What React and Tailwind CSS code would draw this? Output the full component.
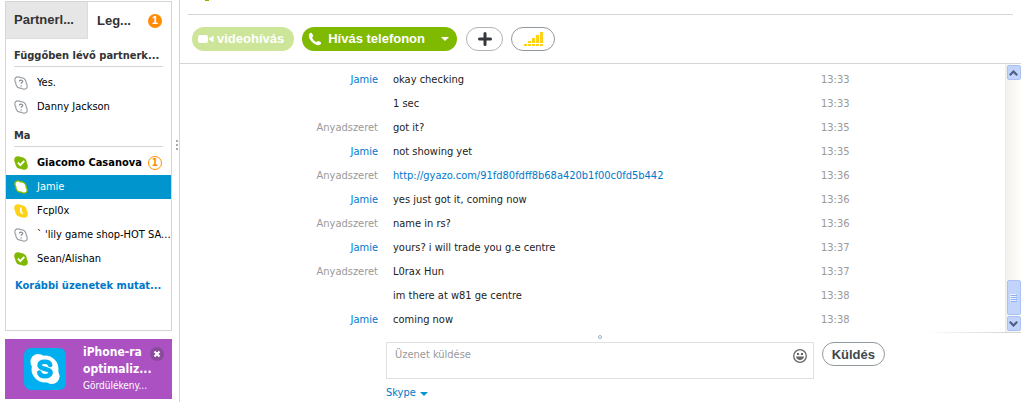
import { useState } from 'react';

const pending = [
  { name: 'Yes.', status: 'unknown' },
  { name: 'Danny Jackson', status: 'unknown' },
];

const today = [
  { name: 'Giacomo Casanova', status: 'online', unread: 1 },
  { name: 'Jamie', status: 'active' },
  { name: 'Fcpl0x', status: 'away' },
  { name: "` 'lily game shop-HOT SA...", status: 'unknown' },
  { name: 'Sean/Alishan', status: 'online' },
];

const messages = [
  { from: 'Jamie', text: 'okay checking', time: '13:33' },
  { from: '', text: '1 sec', time: '13:33' },
  { from: 'Anyadszeret', text: 'got it?', time: '13:35' },
  { from: 'Jamie', text: 'not showing yet', time: '13:35' },
  { from: 'Anyadszeret', text: 'http://gyazo.com/91fd80fdff8b68a420b1f00c0fd5b442', time: '13:36', link: true },
  { from: 'Jamie', text: 'yes just got it, coming now', time: '13:36' },
  { from: 'Anyadszeret', text: 'name in rs?', time: '13:36' },
  { from: 'Jamie', text: 'yours? i will trade you g.e centre', time: '13:37' },
  { from: 'Anyadszeret', text: 'L0rax Hun', time: '13:37' },
  { from: '', text: 'im there at w81 ge centre', time: '13:38' },
  { from: 'Jamie', text: 'coming now', time: '13:38' },
];

// Round body with a lobe at the top left and one at the bottom right
const Blob = ({ fill, inset = 0 }) => (
  <g fill={fill}>
    <circle cx="7" cy="7" r={5.9 - inset} />
    <circle cx="4" cy="4" r={3.8 - inset} />
    <circle cx="10" cy="10" r={3.8 - inset} />
  </g>
);

const StatusIcon = ({ status }) => (
  <svg viewBox="0 0 14 14" className="w-[14px] h-[14px] shrink-0" aria-hidden="true">
    {status === 'unknown' && (
      <>
        <Blob fill="#9aa2a8" />
        <Blob fill="#fff" inset={1.2} />
        <path d="M5.300 5.500c.1-1.800 3.400-1.800 3.400-.1 0 1.200-1.600 1.200-1.600 2.400M7.100 9.200v1.200" fill="none" stroke="#858d93" strokeWidth="1.200" />
      </>
    )}
    {status === 'online' && (
      <>
        <Blob fill="#7fba00" />
        <path d="M4 6.700l2.300 2.400 4-4.200" fill="none" stroke="#fff" strokeWidth="1.900" />
      </>
    )}
    {status === 'active' && (
      <>
        <Blob fill="#7fba00" />
        <Blob fill="#fff" inset={1.3} />
      </>
    )}
    {status === 'away' && (
      <>
        <Blob fill="#ffd117" />
        <path d="M6.800 3.500v4l1.800 2.400" fill="none" stroke="#fff" strokeWidth="1.700" />
      </>
    )}
  </svg>
);

const Contact = ({ contact, selected, onSelect }) => (
  <li>
    <button
      onClick={() => onSelect(contact.name)}
      className={`flex items-center w-full h-6 pl-2 text-left whitespace-nowrap ${
        selected ? 'bg-[#0095cc] text-white' : 'text-black'
      } ${contact.unread ? 'font-bold' : ''}`}
    >
      <StatusIcon status={contact.status} />
      <span className="ml-[9px] pt-px flex-1">{contact.name}</span>
      {contact.unread && (
        <span className="flex items-center justify-center w-[14px] h-[14px] mr-[9px] rounded-full border border-[#ff8c00] text-[#ff8c00] text-[10px] leading-none">
          {contact.unread}
        </span>
      )}
    </button>
  </li>
);

const GroupTitle = ({ children }) => (
  <h2 className="mx-2 h-6 leading-[26px] border-b border-[#d5d5d5] font-bold text-[#333] whitespace-nowrap">{children}</h2>
);

const Sidebar = () => {
  const [selected, setSelected] = useState('Jamie');

  return (
    <aside className="flex flex-col w-[172px] shrink-0 pl-[5px] pt-px pb-[3px]">
      <div className="flex-1 border border-[#d5d5d5]">
        <div className="flex h-[37px] font-['Liberation_Sans',Arial,sans-serif] text-[13px] font-bold text-[#333]">
          <button className="w-[82px] pl-2 text-left bg-[#e6e6e6] border-r border-b border-[#dcdcdc]">Partnerl...</button>
          <button className="flex flex-1 items-center justify-between px-[9px]">
            Leg...
            <span className="flex items-center justify-center w-[14px] h-[14px] rounded-full bg-[#ff8c00] text-white text-[11px] leading-none">1</span>
          </button>
        </div>

        <div className="pt-1">
          <GroupTitle>Függőben lévő partnerk...</GroupTitle>
          <ul className="pt-1">
            {pending.map((c) => (
              <Contact key={c.name} contact={c} selected={selected === c.name} onSelect={setSelected} />
            ))}
          </ul>
        </div>
        <div className="pt-1">
          <GroupTitle>Ma</GroupTitle>
          <ul className="pt-1">
            {today.map((c) => (
              <Contact key={c.name} contact={c} selected={selected === c.name} onSelect={setSelected} />
            ))}
          </ul>
        </div>
        <a href="#history" className="block ml-[9px] mt-[2px] leading-[26px] font-bold text-[#0078ca] whitespace-nowrap">
          Korábbi üzenetek mutat...
        </a>
      </div>

      {/* Promo */}
      <div className="flex mt-2 h-[60px] bg-[#ab51c2] text-white">
        <svg viewBox="0 0 42 42" className="w-[42px] h-[42px] ml-[19px] mt-[9px] shrink-0" aria-hidden="true">
          <rect width="42" height="42" rx="7" fill="#00aff0" />
          <circle cx="21" cy="21" r="13.500" fill="#fff" />
          <circle cx="14.200" cy="13.800" r="7.800" fill="#fff" />
          <circle cx="27.800" cy="28.200" r="7.800" fill="#fff" />
          <path
            d="M26.200 17c-.6-2.400-2.600-3.300-5.200-3.300-3.200 0-5.400 1.300-5.400 3.600 0 5 11 2.400 11 7.200 0 2.400-2.400 3.700-5.600 3.700-3.200 0-5.200-1.200-5.700-3.700"
            fill="none"
            stroke="#00aff0"
            strokeWidth="4.600"
            strokeLinecap="round"
          />
        </svg>
        <div className="flex-1 ml-[17px] pt-[5px] whitespace-nowrap">
          <div className="flex justify-between pr-2">
            <p className="text-[12px] leading-[17px] font-bold">iPhone-ra<br />optimaliz...</p>
            <button aria-label="Bezárás" className="-ml-3 mt-[3px] w-[14px] h-[14px] rounded-full bg-[#8a4a9c]">
              <svg viewBox="0 0 14 14" className="w-[14px] h-[14px]">
                <path d="M4.500 4.500l5 5M9.500 4.500l-5 5" stroke="#fff" strokeWidth="2" />
              </svg>
            </button>
          </div>
          <p className="text-[10px] leading-[15px]">Gördülékeny...</p>
        </div>
      </div>
    </aside>
  );
};

const Toolbar = () => (
  <header className="border-b border-[#d5d5d5]">
    {/* Bottom edge of the contact's status badge */}
    <div className="h-[14px] pl-[25px]">
      <div className="w-1 h-px bg-[#7fba00]" />
    </div>
    <div className="mx-2 border-t border-[#d5d5d5]" />
    <div className="flex gap-2 pl-3 py-3 font-['Liberation_Sans',Arial,sans-serif] text-[13px] font-bold text-white">
      <button disabled className="flex items-center h-6 pl-[6px] pr-[10px] rounded-full bg-[#cce599]">
        <svg viewBox="0 0 16 10" className="w-4 h-[10px] mr-[3px]" fill="#fff" aria-hidden="true">
          <rect x="0" y="1" width="10" height="8" rx="2" />
          <path d="M11 4.500L15.500 1.500v7L11 5.500z" />
        </svg>
        videohívás
      </button>
      <button className="flex items-center h-6 pl-[6px] pr-2 rounded-full bg-[#7fba00]">
        <svg viewBox="0 0 14 14" className="w-[14px] h-[14px] mr-[6px]" fill="#fff" aria-hidden="true">
          <path d="M1.200 2.200C2 .8 3.500.4 4.100 1.400l1 2c.4.900-.9 1.500-.8 2.300.5 1.800 2 3.400 4 4.200.8.200 1.300-1.100 2.200-.8l2 .9c1 .6.700 2-.5 2.800C7.500 15-.8 7 1.200 2.200z" />
        </svg>
        Hívás telefonon
        <svg viewBox="0 0 8 4" className="w-2 h-1 ml-4" fill="#fff" aria-hidden="true">
          <path d="M0 0h8L4 4z" />
        </svg>
      </button>
      <button aria-label="Hozzáadás" className="flex items-center justify-center ml-px w-[37px] h-6 rounded-full border border-[#b0b3b6]">
        <svg viewBox="0 0 14 14" className="w-[14px] h-[14px]" aria-hidden="true">
          <path d="M7 1.500v11M1.500 7h11" stroke="#33363a" strokeWidth="3" strokeLinecap="round" />
        </svg>
      </button>
      <button aria-label="Kapcsolat minősége" className="flex items-center justify-center w-[44px] h-6 rounded-full border border-[#92999e]">
        <svg viewBox="0 0 19 14" className="w-[19px] h-[14px]" fill="#ffd117" aria-hidden="true">
          <path d="M0 12h3v2H0zM4 12h3v2H4zM8 12h3v2H8zM12 12h3v2h-3zM16 12h3v2h-3zM4 9h3v2H4zM8 6h3v5H8zM12 3h3v8h-3zM16 0h3v11h-3z" />
        </svg>
      </button>
    </div>
  </header>
);

const ScrollArrow = ({ label, d }) => (
  <button aria-label={label} className="flex items-center justify-center w-[14px] h-[15px] rounded-[2px] border border-[#a9c1f5] bg-[#c2d3fc]">
    <svg viewBox="0 0 9 6" className="w-[9px] h-[6px]" aria-hidden="true">
      <path d={d} fill="none" stroke="#4d6185" strokeWidth="2.200" />
    </svg>
  </button>
);

const ScrollBar = () => (
  <div className="flex flex-col items-center w-4 shrink-0 py-px border-l border-[#eeede5] bg-linear-to-r from-[#f3f1ec] to-[#fefefb]">
    <ScrollArrow label="Fel" d="M.8 5.200L4.500 1.500l3.700 3.700" />
    <div className="flex-1" />
    <div className="flex items-center justify-center w-[14px] h-[35px] mb-px rounded-[2px] border border-[#a9c1f5] bg-[#c2d3fc]">
      <svg viewBox="0 0 7 8" className="w-[7px] h-2" aria-hidden="true">
        <path d="M0 .5h6M0 2.500h6M0 4.500h6M0 6.500h6" stroke="#eef4fe" />
        <path d="M1 1.500h6M1 3.500h6M1 5.500h6M1 7.500h6" stroke="#8cb0f8" />
      </svg>
    </div>
    <ScrollArrow label="Le" d="M.8.8l3.700 3.700L8.200.8" />
  </div>
);

const Composer = () => {
  const [draft, setDraft] = useState('');

  return (
    <form className="pl-[206px]" onSubmit={(e) => e.preventDefault()}>
      <div className="h-[10px] bg-linear-to-r from-transparent from-85% to-[#d5d5d5] to-98% bg-size-[100%_1px] bg-no-repeat pt-[3px]">
        <span className="block w-1 h-1 ml-[212px] rounded-full border border-[#8ab4cc]" />
      </div>
      <div className="flex items-start gap-2 pr-[136px]">
        <div className="flex flex-1 h-[37px] border border-[#e0e0e0]">
          <textarea
            aria-label="Üzenet küldése"
            placeholder="Üzenet küldése"
            value={draft}
            onChange={(e) => setDraft(e.target.value)}
            className="flex-1 px-2 pt-1 leading-4 resize-none outline-none placeholder:text-[#999]"
          />
          <button type="button" aria-label="Hangulatjelek" className="self-start mt-[6px] mr-[6px]">
            <svg viewBox="0 0 14 14" className="w-[14px] h-[14px]" aria-hidden="true">
              <circle cx="7" cy="7" r="6.300" fill="#fff" stroke="#666" strokeWidth="1.300" />
              <path d="M4 4h2v2H4zM8 4h2v2H8zM3 7.500h8c-.3 4.500-7.700 4.500-8 0z" fill="#666" />
            </svg>
          </button>
        </div>
        <button className="h-6 px-[9px] pt-px rounded-full border border-[#92999e] font-['Liberation_Sans',Arial,sans-serif] text-[13px] font-bold text-[#40474d]">
          Küldés
        </button>
      </div>
      <button type="button" className="flex items-center gap-1 h-[23px] pt-[6px] text-[#0078ca]">
        Skype
        <svg viewBox="0 0 8 4" className="w-2 h-1" fill="#0095cc" aria-hidden="true">
          <path d="M0 0h8L4 4z" />
        </svg>
      </button>
    </form>
  );
};

const App = () => {
  return (
    <div className="flex min-h-screen bg-white font-['DejaVu_Sans_Condensed','DejaVu_Sans',Tahoma,sans-serif] text-[11px] text-[#222]">
      <Sidebar />
      {/* Splitter */}
      <div className="w-2 shrink-0 flex flex-col items-end gap-[2px] pt-[140px] pr-px border-r border-[#d5d5d5]">
        <span className="w-[2px] h-[2px] bg-[#aaa]" />
        <span className="w-[2px] h-[2px] bg-[#aaa]" />
        <span className="w-[2px] h-[2px] bg-[#aaa]" />
      </div>

      <main className="flex flex-col flex-1 min-w-0">
        <Toolbar />
        <section className="flex flex-1">
          <ul className="flex-1 pt-1">
            {messages.map((m, i) => (
              <li key={i} className="flex h-6 leading-6">
                <span className={`w-[198px] text-right ${m.from === 'Jamie' ? 'text-[#0078ca]' : 'text-[#999]'}`}>{m.from}</span>
                <span className="flex-1 ml-[15px]">
                  {m.link ? <a href={m.text} className="text-[#0078ca]">{m.text}</a> : m.text}
                </span>
                <time className="w-[184px] text-[#999]">{m.time}</time>
              </li>
            ))}
          </ul>
          <ScrollBar />
        </section>
        <Composer />
      </main>
    </div>
  );
};

export default App;
